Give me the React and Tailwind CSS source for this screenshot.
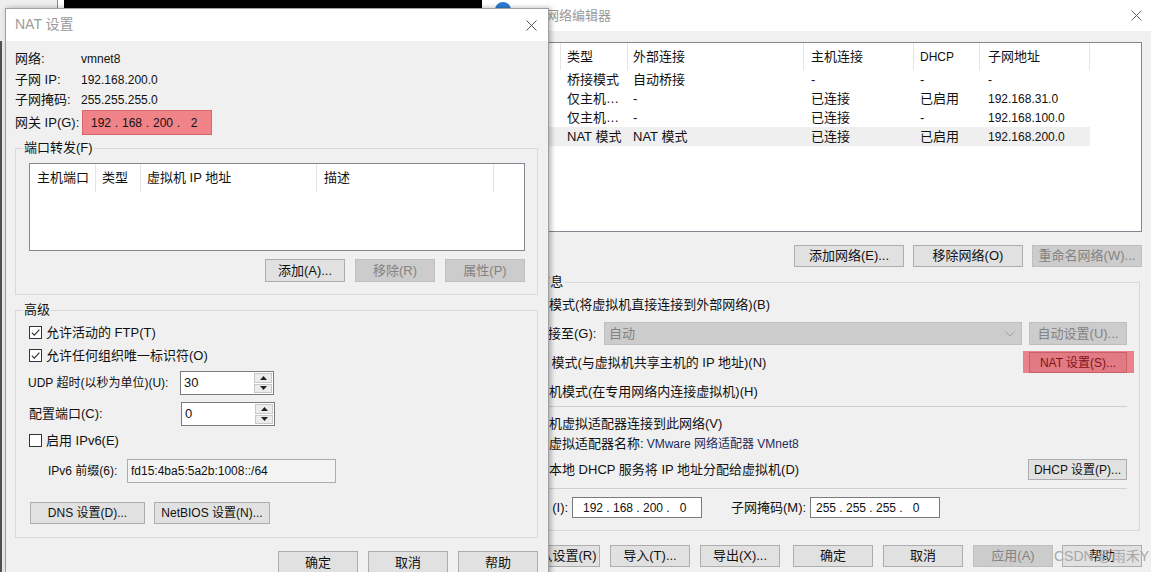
import React from "react";

const FONT = "[font-family:'Liberation_Sans','Noto_Sans_CJK_SC',sans-serif]";

function XIcon({ color = "#444" }) {
  return (
    <svg width="11" height="11" viewBox="0 0 11 11">
      <path d="M0.5 0.5 L10.5 10.5 M10.5 0.5 L0.5 10.5" stroke={color} strokeWidth="1" />
    </svg>
  );
}

function Btn({ children, className = "", disabled = false }) {
  return (
    <div
      className={
        "flex items-center justify-center border whitespace-nowrap shrink-0 " +
        (disabled
          ? "bg-[#cccccc] border-[#bfbfbf] text-[#838383]"
          : "bg-[#e1e1e1] border-[#adadad] text-[#111]") +
        " " +
        className
      }
    >
      {children}
    </div>
  );
}

function Check({ checked }) {
  return (
    <div className="w-[13px] h-[13px] border border-[#333] bg-white flex items-center justify-center shrink-0">
      {checked && (
        <svg width="11" height="11" viewBox="0 0 11 11">
          <path d="M1.8 5.6 L4.3 8.1 L9.4 2.6" stroke="#333" strokeWidth="1.2" fill="none" />
        </svg>
      )}
    </div>
  );
}

function Radio({ checked }) {
  return (
    <div className="w-[13px] h-[13px] rounded-full border border-[#333] bg-white flex items-center justify-center shrink-0">
      {checked && <div className="w-[5px] h-[5px] rounded-full bg-[#333]" />}
    </div>
  );
}

function Arrow({ up }) {
  return (
    <svg width="7" height="4" viewBox="0 0 7 4">
      <path d={up ? "M0 4 L3.5 0 L7 4Z" : "M0 0 L3.5 4 L7 0Z"} fill="#222" />
    </svg>
  );
}

function Spin({ value }) {
  return (
    <div className="flex w-[94px] h-[24px] border border-[#7a7a7a] bg-white shrink-0">
      <div className="flex-1 pl-[3px] pt-[3px] leading-[16px]">{value}</div>
      <div className="w-[19px] flex flex-col gap-px py-px pr-px">
        <div className="flex-1 bg-[#ececec] border border-[#c8c8c8] flex items-center justify-center">
          <Arrow up />
        </div>
        <div className="flex-1 bg-[#ececec] border border-[#c8c8c8] flex items-center justify-center">
          <Arrow />
        </div>
      </div>
    </div>
  );
}

function Octets({ parts, dot }) {
  return (
    <>
      {parts.map((p, i) => (
        <React.Fragment key={i}>
          <span className="w-[24px] text-center">{p}</span>
          {i < parts.length - 1 && <span className={dot + " text-center"}>.</span>}
        </React.Fragment>
      ))}
    </>
  );
}

function InfoRow({ h, label, value }) {
  return (
    <div className={"flex items-center " + h}>
      <span className="w-[66px] shrink-0">{label}</span>
      <span className="text-[12px]">{value}</span>
    </div>
  );
}

function NatDialog() {
  return (
    <div className="absolute left-[5px] top-[8px] w-[544px] h-[600px] bg-[#f0f0f0] border-x border-t border-[#a0a0a0] shadow-[2px_0_5px_rgba(0,0,0,0.3)] flex flex-col">
      <div className="h-[32px] bg-white flex items-center pl-[9px] pr-[11px] shrink-0">
        <span className="text-[14px] text-[#9b9b9b] -mt-[3px]">NAT 设置</span>
        <div className="ml-auto flex">
          <XIcon color="#555" />
        </div>
      </div>
      <div className="flex flex-col pl-[9px] pr-[10px] pt-[7px]">
        <InfoRow h="h-[21px]" label="网络:" value="vmnet8" />
        <InfoRow h="h-[21px]" label="子网 IP:" value="192.168.200.0" />
        <InfoRow h="h-[20px]" label="子网掩码:" value="255.255.255.0" />
        <div className="flex items-center h-[25px]">
          <span className="w-[67px] shrink-0 whitespace-nowrap">网关 IP(G):</span>
          <div className="w-[130px] h-[25px] bg-[#f08388] border border-[#d8676c] flex items-center pl-[6px] text-[12px]">
            <Octets parts={["192", "168", "200", "2"]} dot="w-[7px]" />
          </div>
        </div>

        <fieldset className="mt-[5px] border border-[#d9d9d9]">
          <legend className="ml-[7px] px-[1px]">端口转发(F)</legend>
          <div className="pt-[7px] pl-[13px] pr-[12px] pb-[12px] flex flex-col">
            <div className="h-[88px] border border-[#828790] bg-white">
              <div className="flex h-[28px] items-center">
                <div className="w-[66px] h-full flex items-center pl-[7px] border-r border-[#e5e5e5]">主机端口</div>
                <div className="w-[45px] h-full flex items-center pl-[6px] border-r border-[#e5e5e5]">类型</div>
                <div className="w-[176px] h-full flex items-center pl-[6px] border-r border-[#e5e5e5]">虚拟机 IP 地址</div>
                <div className="w-[177px] h-full flex items-center pl-[7px] border-r border-[#e5e5e5]">描述</div>
              </div>
            </div>
            <div className="flex justify-end gap-[10px] mt-[8px]">
              <Btn className="w-[80px] h-[23px]">添加(A)...</Btn>
              <Btn className="w-[80px] h-[23px]" disabled>移除(R)</Btn>
              <Btn className="w-[80px] h-[23px]" disabled>属性(P)</Btn>
            </div>
          </div>
        </fieldset>

        <fieldset className="mt-[7px] border border-[#d9d9d9]">
          <legend className="ml-[7px] px-[1px]">高级</legend>
          <div className="pt-[3px] pl-[13px] pb-[13px] flex flex-col">
            <div className="flex items-center h-[23px] gap-[4px]">
              <Check checked />
              <span>允许活动的 FTP(T)</span>
            </div>
            <div className="flex items-center h-[23px] gap-[4px]">
              <Check checked />
              <span>允许任何组织唯一标识符(O)</span>
            </div>
            <div className="flex items-center h-[24px] mt-[4px]">
              <span className="w-[152px] shrink-0 -ml-[1px] whitespace-nowrap text-[12px]">UDP 超时(以秒为单位)(U):</span>
              <Spin value="30" />
            </div>
            <div className="flex items-center h-[24px] mt-[7px]">
              <span className="w-[152px] shrink-0 whitespace-nowrap">配置端口(C):</span>
              <Spin value="0" />
            </div>
            <div className="flex items-center h-[23px] gap-[4px] mt-[3px]">
              <Check />
              <span>启用 IPv6(E)</span>
            </div>
            <div className="flex items-center h-[24px] mt-[7px] pl-[19px]">
              <span className="w-[79px] shrink-0 text-[12px] whitespace-nowrap">IPv6 前缀(6):</span>
              <div className="w-[209px] h-[24px] border border-[#adadad] bg-[#f4f4f4] flex items-center pl-[3px] text-[12px]">
                fd15:4ba5:5a2b:1008::/64
              </div>
            </div>
            <div className="flex items-center mt-[19px] pl-[1px]">
              <Btn className="w-[115px] h-[22px] text-[12px]">DNS 设置(D)...</Btn>
              <Btn className="w-[116px] h-[22px] ml-[9px] text-[12px]">NetBIOS 设置(N)...</Btn>
            </div>
          </div>
        </fieldset>

        <div className="flex justify-end gap-[10px] mt-[13px]">
          <Btn className="w-[80px] h-[23px]">确定</Btn>
          <Btn className="w-[80px] h-[23px]">取消</Btn>
          <Btn className="w-[80px] h-[23px]">帮助</Btn>
        </div>
      </div>
    </div>
  );
}

const EW = ["w-[63px]", "w-[67px]", "w-[176px]", "w-[110px]", "w-[66px]", "w-[110px]"];
const EP = ["pl-[6px]", "pl-[6px]", "pl-[5px]", "pl-[7px]", "pl-[6px]", "pl-[8px]"];

const ROWS = [
  ["VMnet0", "桥接模式", "自动桥接", "-", "-", "-"],
  ["VMnet1", "仅主机…", "-", "已连接", "已启用", "192.168.31.0"],
  ["VMnet2", "仅主机…", "-", "已连接", "-", "192.168.100.0"],
  ["VMnet8", "NAT 模式", "NAT 模式", "已连接", "已启用", "192.168.200.0"],
];

function Editor() {
  return (
    <div className="absolute left-[485px] top-0 w-[666px] h-[572px] bg-[#f0f0f0] flex flex-col">
      <div className="h-[31px] bg-white flex items-center shrink-0">
        <div className="self-start mt-[2px] ml-[10px] w-[16px] h-[16px] rounded-full bg-[#2b7cd3]" />
        <span className="ml-[9px] text-[13px] text-[#9a9a9a]">虚拟网络编辑器</span>
        <div className="ml-auto mr-[9px] flex">
          <XIcon color="#666" />
        </div>
      </div>
      <div className="flex flex-col pl-[12px] pr-[9px]">
        <div className="mt-[11px] h-[190px] border border-[#828790] bg-white flex flex-col">
          <div className="flex h-[27px]">
            {["名称", "类型", "外部连接", "主机连接", "DHCP", "子网地址"].map((t, i) => (
              <div
                key={i}
                className={EW[i] + " " + EP[i] + " h-full flex items-center border-r border-[#e5e5e5] " + (t === "DHCP" ? "text-[12px]" : "")}
              >
                {t}
              </div>
            ))}
          </div>
          {ROWS.map((r, ri) => (
            <div key={ri} className="flex h-[19px]">
              {r.map((c, i) => (
                <div
                  key={i}
                  className={
                    EW[i] + " " + EP[i] + " h-full flex items-center whitespace-nowrap " +
                    (ri === 3 ? "bg-[#efefef] " : "") +
                    (i === 5 ? "text-[12px]" : "")
                  }
                >
                  {c}
                </div>
              ))}
            </div>
          ))}
        </div>
        <div className="flex justify-end gap-[9px] mt-[13px]">
          <Btn className="w-[110px] h-[22px]">添加网络(E)...</Btn>
          <Btn className="w-[110px] h-[22px]">移除网络(O)</Btn>
          <Btn className="w-[110px] h-[22px]" disabled>重命名网络(W)...</Btn>
        </div>

        <fieldset className="mt-[7px] -ml-[7px] mr-[2px] border border-[#d9d9d9]">
          <legend className="ml-[4px] px-[1px]">VMnet 信息</legend>
          <div className="flex flex-col pl-[16px] pr-[12px] pt-[5px] pb-[12px]">
            <div className="flex items-center h-[20px] gap-[3px]">
              <Radio />
              <span>桥接模式(将虚拟机直接连接到外部网络)(B)</span>
            </div>
            <div className="flex items-center h-[23px] mt-[7px]">
              <span className="w-[97px] shrink-0 pl-[15px] whitespace-nowrap">已桥接至(G):</span>
              <div className="w-[418px] h-[23px] bg-[#cccccc] border border-[#bfbfbf] flex items-center pl-[4px] text-[#838383]">
                <span>自动</span>
                <svg className="ml-auto mr-[6px]" width="10" height="6" viewBox="0 0 10 6">
                  <path d="M0.5 0.5 L5 5 L9.5 0.5" stroke="#a0a0a0" strokeWidth="1" fill="none" />
                </svg>
              </div>
              <Btn className="w-[98px] h-[23px] ml-auto" disabled>自动设置(U)...</Btn>
            </div>
            <div className="flex items-center h-[21px] mt-[7px] gap-[3px]">
              <Radio checked />
              <span>NAT 模式(与虚拟机共享主机的 IP 地址)(N)</span>
              <Btn className="w-[98px] h-[21px] ml-auto text-[12px]">NAT 设置(S)...</Btn>
            </div>
            <div className="flex items-center h-[20px] mt-[9px] gap-[3px]">
              <Radio />
              <span>仅主机模式(在专用网络内连接虚拟机)(H)</span>
            </div>
            <div className="h-px bg-[#cfcfcf] mt-[4px]" />
            <div className="flex items-center h-[20px] mt-[7px] gap-[3px]">
              <Check checked />
              <span>将主机虚拟适配器连接到此网络(V)</span>
            </div>
            <div className="flex items-center h-[20px] pl-[16px]">
              <span>主机虚拟适配器名称: </span>
              <span className="ml-[3px] text-[12px] text-[#1d2a5c]">VMware 网络适配器 VMnet8</span>
            </div>
            <div className="flex items-center h-[21px] mt-[5px] gap-[3px]">
              <Check checked />
              <span>使用本地 DHCP 服务将 IP 地址分配给虚拟机(D)</span>
              <Btn className="w-[99px] h-[21px] ml-auto text-[12px]">DHCP 设置(P)...</Btn>
            </div>
            <div className="h-px bg-[#cfcfcf] mt-[8px]" />
            <div className="flex items-center h-[21px] mt-[8px]">
              <span className="w-[59px] shrink-0 text-right whitespace-nowrap">子网 IP (I):</span>
              <div className="ml-[6px] w-[130px] h-[21px] bg-white border border-[#7a7a7a] flex items-center pl-[8px] text-[12px]">
                <Octets parts={["192", "168", "200", "0"]} dot="w-[6px]" />
              </div>
              <span className="ml-[29px] w-[79px] shrink-0 whitespace-nowrap">子网掩码(M):</span>
              <div className="w-[130px] h-[21px] bg-white border border-[#7a7a7a] flex items-center pl-[3px] text-[12px]">
                <Octets parts={["255", "255", "255", "0"]} dot="w-[6px]" />
              </div>
            </div>
          </div>
        </fieldset>

        <div className="flex items-center mt-[14px]">
          <Btn className="w-[103px] h-[22px]">还原默认设置(R)</Btn>
          <Btn className="w-[80px] h-[22px] ml-[10px]">导入(T)...</Btn>
          <Btn className="w-[80px] h-[22px] ml-[10px]">导出(X)...</Btn>
          <Btn className="w-[80px] h-[22px] ml-[13px]">确定</Btn>
          <Btn className="w-[80px] h-[22px] ml-[10px]">取消</Btn>
          <Btn className="w-[80px] h-[22px] ml-[10px]" disabled>应用(A)</Btn>
          <Btn className="w-[80px] h-[22px] ml-[9px]">帮助</Btn>
        </div>
      </div>
    </div>
  );
}

export default function App() {
  return (
    <div className={"relative w-[1151px] h-[572px] overflow-hidden bg-white text-[13px] leading-[16px] text-[#111] " + FONT}>
      <div className="absolute left-0 top-0 w-[58px] h-[8px] bg-[#eeeeee] border-r border-[#8a8a8a]" />
      <div className="absolute left-[64px] top-0 w-[418px] h-[8px] bg-black" />
      <div className="absolute left-0 top-[8px] w-[5px] h-[564px] bg-[#ececec]" />
      <div className="absolute left-0 top-[41px] w-[2px] h-[531px] bg-[#505050]" />
      <Editor />
      <div className="absolute left-[1023px] top-[351px] w-[111px] h-[22px] bg-[#e1142380]" />
      <NatDialog />
      <div className="absolute left-[1054px] top-[548px] text-[14px] text-[#a8a8a8] whitespace-nowrap">CSDN @雨禾Y</div>
    </div>
  );
}
